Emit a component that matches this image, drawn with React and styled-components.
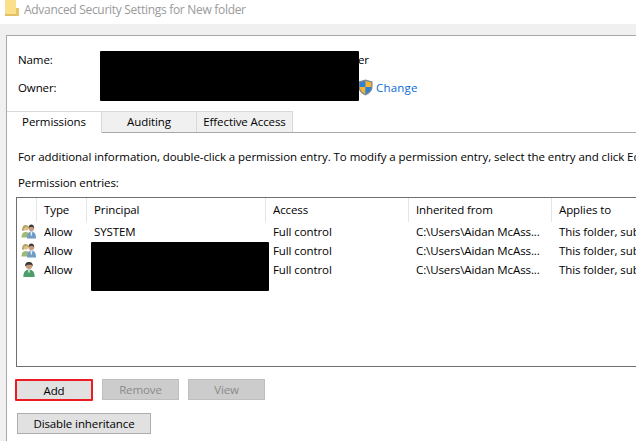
import React from 'react';
import styled, { createGlobalStyle } from 'styled-components';

const rows = [
  { icon: 'group', type: 'Allow', principal: 'SYSTEM' },
  { icon: 'group', type: 'Allow', principal: '' },
  { icon: 'user', type: 'Allow', principal: '' },
];

const GroupIcon = () => (
  <svg width="17" height="17" viewBox="0 0 17 17">
    <circle cx="5" cy="4.5" r="3" fill="#d8c48c" />
    <path d="M1 7.5C1 3 3 1.5 5 1.5S8 3 8 5L6 3.5 3 5 3 8z" fill="#b9a76a" />
    <path d="M0.5 15c0-4 1.500-6 4.500-6s4 2 4 6z" fill="#9dbb78" />
    <circle cx="11" cy="5" r="3" fill="#c99a7c" />
    <path d="M8 5c0-3 1.500-4 3-4s3 1 3 4l-2-1.500-3 .5z" fill="#3c3c34" />
    <path d="M6.500 16c0-5 1.500-7.500 4.500-7.500s5 2.500 5 7.500z" fill="#6f9cc4" />
    <path d="M10 9h2l-.5 4h-1z" fill="#e6eef4" />
  </svg>
);

const UserIcon = () => (
  <svg width="17" height="17" viewBox="0 0 17 17">
    <circle cx="8.500" cy="4.500" r="3.500" fill="#c99a7c" />
    <path d="M4.500 5c-.5-3 1.500-4.500 4-4.500s4.500 1.500 4 4.500L11 3.500H7z" fill="#3a3a32" />
    <path d="M2.500 16.500c0-5 2-8 6-8s6 3 6 8z" fill="#4c9c6c" />
    <path d="M7.500 9h2l-.5 3H8z" fill="#dff0e4" />
  </svg>
);

const ShieldIcon = () => (
  <svg width="15" height="17" viewBox="0 0 15 17">
    <path d="M7.500 0.500 14.500 2.500V8c0 4-3 6.800-7 8.500C3.500 14.800.5 12 .5 8V2.500z" fill="#7d8a96" />
    <path d="M7.500 2 1.800 3.500V8h5.700z" fill="#2f7fd6" />
    <path d="M7.500 2 13.200 3.500V8H7.500z" fill="#f5b52e" />
    <path d="M1.800 8h5.700v7C4.300 13.500 2 11.300 1.800 8z" fill="#f5b52e" />
    <path d="M13.200 8H7.500v7c3.200-1.500 5.500-3.700 5.700-7z" fill="#2f7fd6" />
  </svg>
);

const FolderIcon = () => (
  <svg width="14" height="16" viewBox="0 0 14 16">
    <path d="M0 0H11V16H0z" fill="#fbe08c" />
    <path d="M11 8h3v8h-3z" fill="#e8c468" />
    <path d="M0 14h11v2H0z" fill="#e3bf63" />
  </svg>
);

export default function App() {
  return (
    <>
      <GlobalStyle />
      <Page>
        <TitleBar>
          <FolderIcon />
          <Title>Advanced Security Settings for New folder</Title>
        </TitleBar>
        <Panel>
          <Redaction $left={93} $top={15} $width={259} $height={50} />
          <InfoRow>
            <InfoLabel>Name:</InfoLabel>
            <InfoValue>er</InfoValue>
          </InfoRow>
          <InfoRow>
            <InfoLabel>Owner:</InfoLabel>
            <ShieldWrap>
              <ShieldIcon />
            </ShieldWrap>
            <ChangeLink>Change</ChangeLink>
          </InfoRow>
          <Tabs>
            <Tab $active $width={95}>Permissions</Tab>
            <Tab $width={95}>Auditing</Tab>
            <Tab $width={96}>Effective Access</Tab>
          </Tabs>
          <Body>
            <Hint>For additional information, double-click a permission entry. To modify a permission entry, select the entry and click Edit (if available).</Hint>
            <EntriesLabel>Permission entries:</EntriesLabel>
            <ListBox>
              <HeaderRow>
                <HeadCell />
                <HeadCell>Type</HeadCell>
                <HeadCell>Principal</HeadCell>
                <HeadCell>Access</HeadCell>
                <HeadCell>Inherited from</HeadCell>
                <HeadCell>Applies to</HeadCell>
              </HeaderRow>
              {rows.map((row, i) => (
                <EntryRow key={i}>
                  <IconCell>{row.icon === 'group' ? <GroupIcon /> : <UserIcon />}</IconCell>
                  <Cell>{row.type}</Cell>
                  <Cell>{row.principal}</Cell>
                  <Cell>Full control</Cell>
                  <Cell>C:\Users\Aidan McAss...</Cell>
                  <Cell>This folder, subfolders and files</Cell>
                </EntryRow>
              ))}
              <Redaction $left={74} $top={44} $width={178} $height={49} />
            </ListBox>
            <ButtonRow>
              <Highlight>
                <Button $width={74}>Add</Button>
              </Highlight>
              <Button $width={77} disabled>Remove</Button>
              <Button $width={77} disabled>View</Button>
            </ButtonRow>
            <Button $width={134}>Disable inheritance</Button>
          </Body>
        </Panel>
      </Page>
    </>
  );
}

const GlobalStyle = createGlobalStyle`
  html, body {
    margin: 0;
    padding: 0;
    background: #f0f0f0;
  }
  body {
    font-family: "Open Sans", "Noto Sans", sans-serif;
    font-size: 11.5px;
    letter-spacing: -0.1px;
    color: #000;
  }
`;

const Page = styled.div`
  width: 636px;
  height: 441px;
  overflow: hidden;
  background: #f0f0f0;
`;

const TitleBar = styled.div`
  display: flex;
  align-items: flex-start;
  gap: 5px;
  height: 24px;
  padding-left: 5px;
  background: #fff;
`;

const Title = styled.span`
  font-size: 12px;
  line-height: 19px;
  letter-spacing: -0.3px;
  color: #9a9a9a;
`;

const Panel = styled.div`
  position: relative;
  box-sizing: border-box;
  width: 700px;
  height: 420px;
  margin: 11px 0 0 6px;
  padding-top: 9px;
  background: #fff;
  border: 1px solid #a8a8a8;
  border-right: 0;
`;

const Redaction = styled.div`
  position: absolute;
  left: ${props => props.$left}px;
  top: ${props => props.$top}px;
  width: ${props => props.$width}px;
  height: ${props => props.$height}px;
  background: #000;
  border-radius: 1px;
`;

const InfoRow = styled.div`
  display: flex;
  align-items: center;
  height: 28px;
  padding-left: 11px;
`;

const InfoLabel = styled.span`
  width: 339px;
`;

const InfoValue = styled.span`
  margin-left: 1px;
`;

const ShieldWrap = styled.span`
  display: flex;
  margin-left: 1px;
  width: 18px;
`;

const ChangeLink = styled.a`
  color: #0a6cd6;
  letter-spacing: 0.2px;
`;

const Tabs = styled.div`
  display: flex;
  height: 21px;
  margin-top: 10px;
  border-bottom: 1px solid #a8a8a8;
`;

const Tab = styled.div`
  box-sizing: border-box;
  width: ${props => props.$width}px;
  height: ${props => (props.$active ? 22 : 21)}px;
  line-height: 20px;
  text-align: center;
  background: ${props => (props.$active ? '#fff' : '#f0f0f0')};
  border: 1px solid #d9d9d9;
  border-left-width: 0;
  border-bottom: 0;
  white-space: nowrap;
`;

const Body = styled.div`
  padding: 0 0 0 10px;
`;

const Hint = styled.div`
  margin: 15px 0 0 1px;
  line-height: 17px;
  letter-spacing: -0.065px;
  white-space: nowrap;
`;

const EntriesLabel = styled.div`
  margin: 9px 0 6px 1px;
  line-height: 17px;
`;

const ListBox = styled.div`
  position: relative;
  box-sizing: border-box;
  width: 690px;
  height: 170px;
  margin: 0 0 12px -1px;
  border: 1px solid #6f6f6f;
`;

const columns = '20px 50px 179px 143px 143px 1fr';

const HeaderRow = styled.div`
  display: grid;
  grid-template-columns: ${columns};
  height: 24px;
`;

const HeadCell = styled.div`
  padding-left: 7px;
  line-height: 24px;
  border-right: 1px solid #e5e5e5;
  white-space: nowrap;
`;

const EntryRow = styled.div`
  display: grid;
  grid-template-columns: ${columns};
  height: 19px;
  align-items: center;
`;

const Cell = styled.div`
  padding-left: 7px;
  white-space: nowrap;
  overflow: hidden;
`;

const IconCell = styled.div`
  display: flex;
  padding-left: 4px;
`;

const ButtonRow = styled.div`
  display: flex;
  align-items: flex-start;
  gap: 9px;
  margin-bottom: 12px;
`;

const Highlight = styled.div`
  display: flex;
  margin-left: -2px;
  border: 2px solid #ed1c24;
  border-radius: 1px;
`;

const Button = styled.button`
  display: block;
  box-sizing: border-box;
  width: ${props => props.$width}px;
  height: 21px;
  padding: 0;
  font: inherit;
  letter-spacing: inherit;
  color: ${props => (props.disabled ? '#8a8a8a' : '#000')};
  background: ${props => (props.disabled ? '#cccccc' : '#e1e1e1')};
  border: 1px solid ${props => (props.disabled ? '#bfbfbf' : '#adadad')};
  ${Highlight} & {
    height: 18px;
    border: 0;
  }
`;
